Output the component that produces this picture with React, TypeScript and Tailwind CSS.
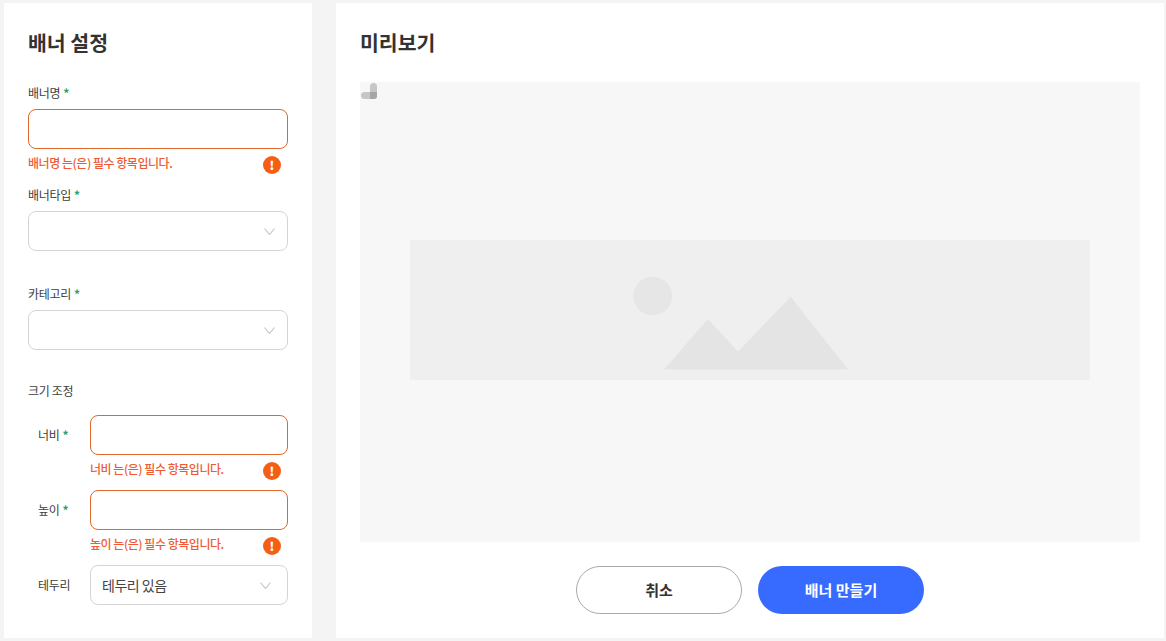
const FONT = "font-['Noto_Sans_CJK_KR','Noto_Sans',sans-serif]";

function Req() {
  return <span className="text-[#2e9e6b] font-bold ml-[3px]">*</span>;
}

function Chevron({ className }: { className: string }) {
  return (
    <svg width="11" height="7" viewBox="0 0 11 7" fill="none" className={className}>
      <path d="M.5.5l5 6 5-6" stroke="#c4c4c4" strokeWidth="1.1" />
    </svg>
  );
}

function ErrorRow({ text, h }: { text: string; h: string }) {
  return (
    <div className={`flex items-start justify-between pr-[7px] ${h}`}>
      <span className="text-[12px] leading-[16px] font-medium tracking-[-0.47px] text-[#ee5a35] mt-[6px]">{text}</span>
      <span className="mt-[7px] w-[18px] h-[18px] rounded-full bg-[#f55f14] flex items-center justify-center text-white text-[12px] leading-none font-black">!</span>
    </div>
  );
}

function Input() {
  return <div className="h-10 rounded-[8px] border border-[#e2672b] bg-white" />;
}

function Select({ value, chevron = "mr-[12px]" }: { value?: string; chevron?: string }) {
  return (
    <div className="h-10 rounded-[8px] border border-[#d4d4d4] bg-white flex items-center justify-between pl-[11px]">
      <span className="text-[14px] tracking-[-0.5px] text-[#444]">{value}</span>
      <Chevron className={chevron} />
    </div>
  );
}

function Label({ children }: { children: React.ReactNode }) {
  return <div className="text-[12px] leading-[16px] tracking-[-0.3px] text-[#3d3d3d] mb-2">{children}</div>;
}

function SizeRow({ label, req = true, children }: { label: string; req?: boolean; children: React.ReactNode }) {
  return (
    <div className="flex">
      <div className="w-[62px] pl-[10px] h-10 flex items-center text-[12px] tracking-[-0.3px] text-[#3d3d3d]">
        {label}
        {req && <Req />}
      </div>
      <div className="w-[198px]">{children}</div>
    </div>
  );
}

export default function App() {
  return (
    <div className={`${FONT} w-[1166px] h-[641px] bg-[#f4f4f4] flex gap-6 pl-1 pr-[2px] pt-[3px] pb-[3px] overflow-hidden`}>
      <aside className="w-[308px] bg-white pl-6 pr-6 pt-[27px]">
        <h2 className="text-[20.5px] leading-6 font-bold text-[#333] mb-[31px]">배너 설정</h2>
        <Label>배너명<Req /></Label>
        <Input />
        <ErrorRow text="배너명 는(은) 필수 항목입니다." h="h-[38px]" />
        <Label>배너타입<Req /></Label>
        <Select />
        <div className="h-[35px]" />
        <Label>카테고리<Req /></Label>
        <Select />
        <div className="h-[33px]" />
        <div className="text-[12px] leading-[16px] tracking-[-0.3px] text-[#3d3d3d] mb-4">크기 조정</div>
        <SizeRow label="너비">
          <Input />
          <ErrorRow text="너비 는(은) 필수 항목입니다." h="h-[35px]" />
        </SizeRow>
        <SizeRow label="높이">
          <Input />
          <ErrorRow text="높이 는(은) 필수 항목입니다." h="h-[35px]" />
        </SizeRow>
        <SizeRow label="테두리" req={false}>
          <Select value="테두리 있음" chevron="mr-[16px]" />
        </SizeRow>
      </aside>
      <main className="flex-1 bg-white px-6 pt-[27px]">
        <h2 className="text-[20.5px] leading-6 font-bold text-[#333] mb-7">미리보기</h2>
        <div className="relative h-[460px] pb-1 bg-[#f7f7f7] flex items-center justify-center">
          <svg width="16" height="16" viewBox="0 0 16 16" className="absolute left-[1px] top-[1px]">
            <rect x="0" y="9" width="16" height="7" rx="3.5" fill="#c6c6c6" />
            <rect x="9" y="0" width="7" height="16" rx="3.5" fill="#c6c6c6" />
            <path d="M9 9h7v3.5a3.5 3.5 0 0 1-3.5 3.5H9z" fill="#a6a6a6" />
          </svg>
          <div className="w-[680px] h-[140px] bg-[#efefef] flex items-center justify-center">
            <svg width="680" height="140" viewBox="0 0 680 140">
              <circle cx="242.7" cy="56" r="19.3" fill="#e6e6e6" />
              <path d="M254 129.5L298 79l30 32.7L380.7 56.7 438 129.5z" fill="#e4e4e4" />
            </svg>
          </div>
        </div>
        <div className="flex justify-center gap-4 mt-6">
          <button className="w-[166px] h-12 rounded-full border border-[#aaa] bg-white text-[15px] font-bold text-[#333]">취소</button>
          <button className="w-[166px] h-12 rounded-full bg-[#376bff] text-[15px] font-bold text-white">배너 만들기</button>
        </div>
      </main>
    </div>
  );
}
